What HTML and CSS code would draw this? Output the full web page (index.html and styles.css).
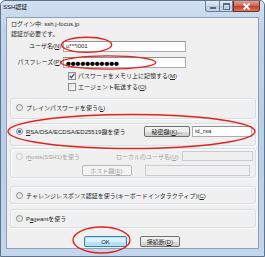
FILE: index.html
```html
<!DOCTYPE html>
<html lang="ja">
<head>
  <meta charset="UTF-8">
  <title>SSH認証</title>
  <link rel="stylesheet" href="styles.css">
</head>
<body>
  <div class="window">
    <div class="titlebar">
      <span class="title">SSH認証</span>
      <div class="caption">
        <span class="cap-btn cap-min"><i></i></span>
        <span class="cap-btn cap-max"><i></i></span>
        <span class="cap-btn cap-close">
          <svg width="9" height="7" viewBox="0 0 9 7"><path d="M1.5 0.5 L7.5 6.5 M7.5 0.5 L1.5 6.5" stroke="#fff" stroke-width="1.8"/></svg>
        </span>
      </div>
    </div>

    <div class="client">
      <p class="info">ログイン中: ssh.j-focus.jp</p>
      <p class="info">認証が必要です。</p>

      <div class="field-row user-row">
        <label class="field-label">ユーザ名(<u>N</u>):</label>
        <div class="textbox">u***l001</div>
      </div>
      <div class="field-row pass-row">
        <label class="field-label">パスフレーズ(<u>P</u>):</label>
        <div class="textbox"><span class="dots">●●●●●●●●●●●</span></div>
      </div>

      <div class="check-row first">
        <span class="checkbox checked">
          <svg width="6" height="6" viewBox="0 0 6 6"><path d="M0.8 3 L2.4 4.8 L5.3 0.8" fill="none" stroke="#3b4f8c" stroke-width="1.3"/></svg>
        </span>
        <span>パスワードをメモリ上に記憶する(<u>M</u>)</span>
      </div>
      <div class="check-row">
        <span class="checkbox"></span>
        <span>エージェント転送する(<u>O</u>)</span>
      </div>

      <div class="group group-plain">
        <div class="radio-row">
          <span class="radio"></span>
          <span>プレインパスワードを使う(<u>L</u>)</span>
        </div>
      </div>

      <div class="group group-rsa">
        <div class="radio-row">
          <span class="radio selected"></span>
          <span class="grow"><u>R</u>SA/DSA/ECDSA/ED25519鍵を使う</span>
          <span class="button key-btn">秘密鍵(<u>K</u>)...</span>
          <div class="textbox key-file">id_rsa</div>
        </div>
      </div>

      <div class="group group-rhosts">
        <div class="radio-row disabled">
          <span class="radio"></span>
          <span class="grow">r<u>h</u>osts(SSH1)を使う</span>
          <span class="local-label">ローカルのユーザ名(<u>U</u>):</span>
          <div class="textbox off local-user"></div>
        </div>
        <div class="host-row">
          <span class="button off host-btn">ホスト鍵(<u>E</u>):</span>
          <div class="textbox off host-file"></div>
        </div>
      </div>

      <div class="group group-chal">
        <div class="radio-row">
          <span class="radio"></span>
          <span>チャレンジレスポンス認証を使う(キーボードインタラクティブ)(<u>C</u>)</span>
        </div>
      </div>

      <div class="group group-pageant">
        <div class="radio-row">
          <span class="radio"></span>
          <span>P<u>a</u>geantを使う</span>
        </div>
      </div>

      <div class="actions">
        <span class="button default ok-btn">OK</span>
        <span class="button cancel-btn">接続断(<u>D</u>)</span>
      </div>
    </div>

    <!-- red annotation rings drawn over the dialog -->
    <svg class="marks" width="265" height="257" viewBox="0 0 265 257">
      <ellipse cx="86.7" cy="44.8" rx="25" ry="7.6"/>
      <ellipse cx="108.3" cy="62.5" rx="47.5" ry="6.6"/>
      <ellipse cx="131.5" cy="131.5" rx="123.5" ry="17"/>
      <ellipse cx="101.5" cy="240" rx="28.5" ry="13"/>
    </svg>
  </div>
</body>
</html>
```

FILE: styles.css
```css
/* General */
html, body {
  margin: 0;
  padding: 0;
}

body {
  font-family: "Liberation Sans", "Noto Sans CJK JP", sans-serif;
  font-size: 6px;
  color: #262626;
  background: #fff;
}

p {
  margin: 0;
}

u {
  text-underline-offset: 1px;
}

/* Window frame */
.window {
  position: relative;
  width: 265px;
  height: 257px;
  box-sizing: border-box;
  border: 1px solid #5f738a;
  border-radius: 5px 5px 0 0;
  background: linear-gradient(180deg, #d3e1f1 0%, #bfd3ea 12%, #b9cfe7 60%, #c4d7ec 100%);
  overflow: hidden;
}

.titlebar {
  display: flex;
  justify-content: space-between;
  align-items: flex-start;
  height: 16px;
}

.title {
  margin: 2px 0 0 2px;
  line-height: 9px;
  color: #111;
}

.caption {
  display: flex;
  margin-right: 4px;
}

.cap-btn {
  display: flex;
  align-items: center;
  justify-content: center;
  height: 11px;
  box-sizing: border-box;
  border: 1px solid #6a7f98;
  border-top: none;
}

.cap-min,
.cap-max {
  width: 14px;
  background: linear-gradient(180deg, #e4ecf6 0%, #c9d7e8 50%, #b7c9de 51%, #cad9ea 100%);
}

.cap-min {
  border-radius: 0 0 0 3px;
  border-right: none;
}

.cap-min i {
  width: 6px;
  height: 2px;
  margin-top: 3px;
  background: #5a6b80;
}

.cap-max i {
  width: 5px;
  height: 4px;
  border: 1px solid #5a6b80;
  border-top-width: 2px;
}

.cap-close {
  width: 27px;
  border-radius: 0 0 3px 0;
  border-color: #7b2a24;
  background: linear-gradient(180deg, #e4a193 0%, #d0674f 45%, #c1442c 55%, #d27a5e 100%);
}

/* Client area */
.client {
  display: flex;
  flex-direction: column;
  margin: 0 5px;
  height: 232px;
  box-sizing: border-box;
  padding: 1px 3px 0 3px;
  background: #f0f0f0;
  border: 1px solid #8ea1b8;
}

.info {
  line-height: 10px;
  padding-left: 1px;
}

.field-row {
  display: flex;
  align-items: center;
  height: 11px;
}

.user-row {
  margin-top: 2px;
}

.pass-row {
  margin-top: 5px;
}

.field-label {
  width: 53px;
  text-align: right;
  line-height: 11px;
}

.textbox {
  box-sizing: border-box;
  height: 11px;
  line-height: 9px;
  padding: 0 2px;
  background: #fff;
  border: 1px solid #abadb3;
  border-top-color: #8e9196;
  white-space: nowrap;
  overflow: hidden;
}

.field-row .textbox {
  width: 123px;
}

.dots {
  font-family: "Noto Sans CJK JP", sans-serif;
  font-size: 4.8px;
  line-height: 9px;
  color: #000;
}

/* Check boxes */
.check-row {
  display: flex;
  align-items: center;
  gap: 2px;
  height: 11px;
  padding-left: 58px;
}

.check-row.first {
  margin-top: 2px;
}

.checkbox {
  display: flex;
  align-items: center;
  justify-content: center;
  width: 6px;
  height: 6px;
  border: 1px solid #8f8f8f;
  background: linear-gradient(135deg, #e0e0e0, #fbfbfb);
}

/* Group boxes */
.group {
  box-sizing: border-box;
  width: 246px;
  border: 1px solid #d5dfe5;
  border-radius: 3px;
  box-shadow: inset 1px 1px 0 #fbfbfb, 1px 1px 0 #fbfbfb;
  padding: 3px 3px 0 5px;
}

.group-plain {
  height: 21px;
  margin-top: 6px;
}

.group-rsa {
  height: 23px;
  margin-top: 4px;
  padding-top: 2px;
}

.group-rhosts {
  height: 30px;
  margin-top: 2px;
  padding: 2px 2px 0 5px;
}

.group-chal {
  height: 18px;
  margin-top: 8px;
}

.group-pageant {
  height: 19px;
  margin-top: 5px;
}

.radio-row {
  display: flex;
  align-items: center;
  gap: 3px;
  height: 10px;
  white-space: nowrap;
}

.group-rsa .radio-row {
  height: 11px;
}

.grow {
  flex: 1;
}

.radio {
  flex: none;
  display: flex;
  align-items: center;
  justify-content: center;
  width: 5px;
  height: 5px;
  border: 1px solid #8b8b8b;
  border-radius: 50%;
  background: linear-gradient(135deg, #d6d6d6, #fafafa);
}

.radio.selected::after {
  content: "";
  width: 3px;
  height: 3px;
  border-radius: 50%;
  background: #2d64b0;
}

.disabled {
  color: #a3a3a3;
}

.disabled .radio {
  border-color: #c4c4c4;
  background: #f4f4f4;
}

/* Buttons */
.button {
  display: flex;
  align-items: center;
  justify-content: center;
  box-sizing: border-box;
  height: 11px;
  border: 1px solid #707070;
  border-radius: 2px;
  background: linear-gradient(180deg, #f4f4f4 0%, #ebebeb 50%, #dddddd 51%, #cfcfcf 100%);
  white-space: nowrap;
}

.button.off {
  color: #a3a3a3;
  border-color: #b5b8bb;
  background: #f4f4f4;
}

.button.default {
  border-color: #3c7fb1;
  box-shadow: inset 0 0 0 1px #b6e2f8;
  background: linear-gradient(180deg, #eaf6fd 0%, #d9f0fc 50%, #bee6fd 51%, #a7d9f5 100%);
}

.key-btn {
  width: 46px;
  margin-left: 14px;
}

.key-file {
  width: 60px;
  margin-left: -1px;
}

.local-label {
  margin-right: -1px;
}

.local-user {
  width: 71px;
  height: 10px;
}

.textbox.off {
  background: #f0f0f0;
  border-color: #c9ccd0;
}

.host-row {
  display: flex;
  align-items: center;
  gap: 13px;
  margin-top: 4px;
  padding-left: 66px;
}

.host-btn {
  width: 50px;
}

.host-file {
  width: 105px;
}

/* Dialog buttons */
.actions {
  display: flex;
  justify-content: center;
  gap: 13px;
  margin-top: 8px;
  padding-right: 1px;
}

.ok-btn {
  width: 43px;
}

.cancel-btn {
  width: 40px;
}

/* Red annotation overlay */
.marks {
  position: absolute;
  left: -1px;
  top: -1px;
  pointer-events: none;
}

.marks ellipse {
  fill: none;
  stroke: #e3231f;
  stroke-width: 1.4;
}
```
